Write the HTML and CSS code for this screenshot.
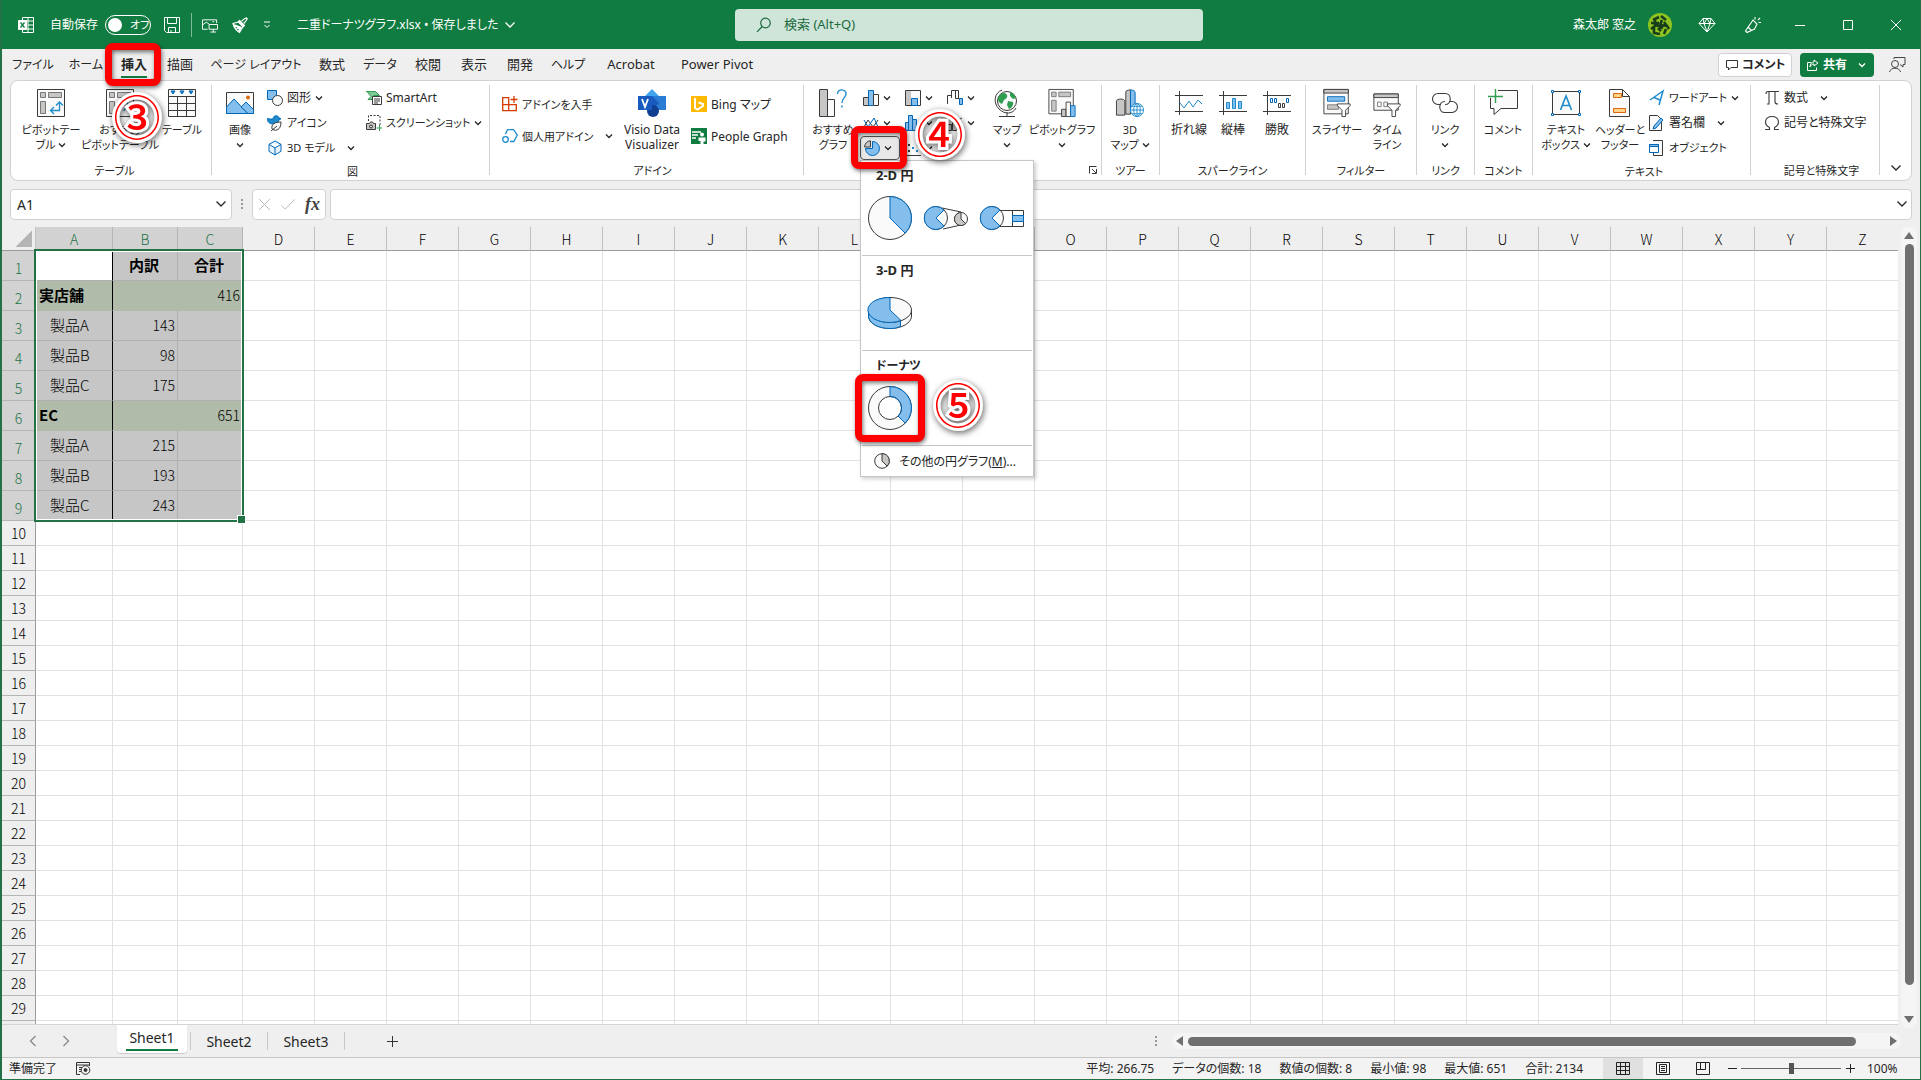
FILE: index.html
```html
<!DOCTYPE html>
<html lang="ja">
<head>
<meta charset="utf-8">
<title>二重ドーナツグラフ.xlsx</title>
<link rel="stylesheet" href="styles.css">
</head>
<body>
<svg class="defs" aria-hidden="true">
  <symbol id="chev" viewBox="0 0 8 8"><path d="M1 2.5l3 3 3-3" fill="none" stroke="currentColor" stroke-width="1.3"/></symbol>
  <symbol id="chev-lg" viewBox="0 0 12 8"><path d="M1.500 1.500L6 6l4.500-4.500" fill="none" stroke="currentColor" stroke-width="1.300"/></symbol>
</svg>

<header class="titlebar">
  <div class="quick">
    <svg class="ic excel" viewBox="0 0 16 16" fill="none" stroke="#fff"><path d="M4.500 3V.5h11v15h-11V13M10 .5v15M4.500 4h11M10 8h5.500M4.500 12h11"/><path d="M.5 3.500h8v9h-8z" fill="#fff"/><path d="M2.500 5.500l4 5M6.500 5.500l-4 5" stroke="#107c41" stroke-width="1.300"/></svg>
    <span class="autosave">自動保存</span>
    <button class="toggle"><i></i>オフ</button>
    <svg class="ic save" viewBox="0 0 16 16" fill="none" stroke="#fff"><path d="M.5.5h15v15H2.500l-2-2zM3.500.5v6h9v-6M4.500 15.500v-5h7v5M7 15v-2"/></svg>
    <span class="vsep"></span>
    <svg class="ic present" viewBox="0 0 17 16" fill="none" stroke="#fff"><path d="M6 12.500H.5v-10h15V6M.5 8l4-3 3 2M7.500 7.500h9v5h-9zM12 12.500v3M9 15.500h6"/><path d="M11 4.500h2"/></svg>
    <svg class="ic brush" viewBox="0 0 16 16" fill="none" stroke="#fff" stroke-width="1.200"><path d="M15 .8c-2 0-4 2-5.500 3.500M15.200 1c0 2-2 4-3.500 5.500"/><path d="M7.500 3.500l5 5-1.200 1.200-5-5z" fill="#fff"/><path d="M6.500 5L1 6.500c1 4 4 7.500 6.500 9L11 9.500z"/><path d="M1.500 7l8.500 3-2.500 5-1.500-1 1-2-3 .5 1-2.500-3 .5z" fill="#fff" stroke="none"/></svg>
    <svg class="ic more" viewBox="0 0 8 8" fill="none" stroke="#fff"><path d="M1 1h6M1.500 4L4 6.500 6.500 4"/></svg>
    <span class="doc">二重ドーナツグラフ.xlsx • 保存しました</span>
    <svg class="docchev" viewBox="0 0 12 8"><use href="#chev-lg"/></svg>
  </div>
  <label class="search">
    <svg viewBox="0 0 16 16" fill="none" stroke="#1b6b3e" stroke-width="1.200"><circle cx="9.500" cy="6" r="4.800"/><path d="M6.200 9.500L1 14.800"/></svg>
    <input type="text" placeholder="検索 (Alt+Q)" aria-label="検索">
  </label>
  <div class="account">
    <span>森太郎 窓之</span>
    <svg class="avatar" viewBox="0 0 24 24"><circle cx="12" cy="12" r="12" fill="#8fc31f"/><path d="M5 7l6-3M13 3l5 4M3 10h8M7 6v7l-4 3M14 7l-2 5 8 1M16 9l5 7M6 15v5l6 1M10 15l3 3M18 16l-2 5M8 12l7 3" stroke="#173d1b" stroke-width="2.600" fill="none"/></svg>
    <svg class="gem" viewBox="0 0 18 18" fill="none" stroke="#fff"><path d="M5 2.500h8l4 5L9 16 1 7.500zM1 7.500h16M5 2.500l1 5L9 16l3-8.500 1-5M6 7.500l3-5 3 5"/></svg>
    <svg class="pen" viewBox="0 0 18 18" fill="none" stroke="#fff" stroke-width="1.100"><path d="M9 4l4 4-2.500 5L3 16.500 1.500 15zM4 11l3.500 3.500M11 3.500V1M14 4l2-2M14.500 6.500H17"/></svg>
    <button class="win" aria-label="最小化"><svg viewBox="0 0 10 10" stroke="#fff"><path d="M0 5.500h10"/></svg></button>
    <button class="win" aria-label="最大化"><svg viewBox="0 0 10 10" stroke="#fff" fill="none"><path d="M.5.5h9v9h-9z"/></svg></button>
    <button class="win" aria-label="閉じる"><svg viewBox="0 0 10 10" stroke="#fff"><path d="M0 0l10 10M10 0L0 10"/></svg></button>
  </div>
</header>

<nav class="tabs">
  <a href="#" class="w56 k">ファイル</a><a href="#" class="w50 k">ホーム</a><a href="#" class="w46 active"><b>挿入</b><span class="mark mark-tab"></span><span class="step step-3">③</span></a><a href="#" class="w46">描画</a><a href="#" class="w106 k">ページ レイアウト</a><a href="#" class="w46">数式</a><a href="#" class="w50 k">データ</a><a href="#" class="w46">校閲</a><a href="#" class="w46">表示</a><a href="#" class="w46">開発</a><a href="#" class="w50 k">ヘルプ</a><a href="#" class="w76">Acrobat</a><a href="#" class="w96">Power Pivot</a>
  <div class="share-area">
    <button class="comment"><svg viewBox="0 0 12 12" fill="none" stroke="#333"><path d="M.5 1.500h11v7H5l-2.500 2.500V8.500h-2z"/></svg>コメント</button>
    <button class="share"><svg viewBox="0 0 12 12" fill="none" stroke="#fff"><path d="M4 3.500H.5v8h9V8.500M7 1l4 3-4 3V5C5 5 4 6 3 8c0-3 1.500-5 4-5z"/></svg>共有<svg class="chev"><use href="#chev"/></svg></button>
    <svg class="people" viewBox="0 0 17 17" fill="none" stroke="#444"><circle cx="6" cy="8" r="3.500"/><path d="M.5 16c1-5 10-5 11 0M5 3V1.500h11v7h-2v2.500l-3-2.500"/></svg>
  </div>
</nav>

<section class="ribbon">
  <div class="group g-table">
    <div class="tools">
      <button class="big w66"><svg viewBox="0 0 28 28" fill="none" stroke="#3b3a39"><path d="M.5.5h27v27H.5z" fill="#fafafa"/><path d="M3.500 3.500h5v5h-5zM11.500 3.500h13v5h-13zM3.500 12.500h5v12h-5z" fill="#c8c6c4" stroke="#797775"/><path d="M14 21.500h8.500v-8M17 18l-3.500 3.500L17 25M19 16.500l3.500-3.500 3.500 3.500" stroke="#1e8bcd" stroke-width="1.300"/></svg><span>ピボットテー<br>ブル <svg class="chev"><use href="#chev"/></svg></span></button>
      <button class="big w72"><svg viewBox="0 0 28 28" fill="none" stroke="#3b3a39"><path d="M.5.5h27v27H.5z" fill="#fafafa"/><path d="M3.500 3.500h5v5h-5zM11.500 3.500h13v5h-13zM3.500 12.500h5v12h-5z" fill="#c8c6c4" stroke="#797775"/><path d="M14 16c0-4 8-4 8 0 0 3-4 3-4 6" stroke="#1e8bcd" stroke-width="1.300"/></svg><span>おすすめ<br>ピボットテーブル</span></button>
      <button class="big w52"><svg viewBox="0 0 28 28" fill="none" stroke="#3b3a39"><path d="M.5.5h27v27H.5z" fill="#fafafa"/><path d="M.5 7.500h27M.5 14.500h27M.5 21.500h27M9.500 7.500v20M18.500 7.500v20"/><path d="M3 2h4L5 5zM12 2h4l-2 3zM21 2h4l-2 3z" fill="#1e8bcd" stroke="#0067b8"/></svg><span>テーブル</span></button>
    </div>
    <h2>テーブル</h2>
  </div>

  <div class="group g-pict">
    <div class="tools">
      <button class="big w48"><svg viewBox="0 0 28 28" fill="none" stroke="#3b3a39"><path d="M.5 3.500h27v21H.5z" fill="#fafafa"/><path d="M.5 18L8 10l14 14.500H.5z" fill="#83beec" stroke="#0067b8"/><path d="M15 18l5-5 7.500 7.500v4H22z" fill="#83beec" stroke="#0067b8"/><circle cx="22" cy="8.500" r="2" fill="#e0670b" stroke="none"/></svg><span>画像<br><svg class="chev"><use href="#chev"/></svg></span></button>
      <div class="stack w96">
        <button><svg viewBox="0 0 16 16"><path d="M.5.5h9v9h-9z" fill="#83beec" stroke="#0067b8"/><circle cx="10.500" cy="10.500" r="5" fill="#fafafa" stroke="#3b3a39"/></svg>図形<svg class="chev"><use href="#chev"/></svg></button>
        <button><svg viewBox="0 0 16 16"><path d="M.5 3.500c2 .5 4 1 6 0C6 1.500 8 .5 9.500.8S12 2 12 3l2 .8-2 .8c0 3-3 4.400-6 4.400-3.500 0-6-2.500-5.500-5.500z" fill="#1e8bcd" stroke="#0067b8"/><path d="M5 14c-1-5 3-7 9-7 0 6-3 9-7 8zM4 16l6-5" fill="#fafafa" stroke="#3b3a39"/></svg><span class="k">アイコン</span></button>
        <button><svg viewBox="0 0 16 16"><path d="M8 1l6 3.300v7L8 15l-6-3.700v-7zM2 4.300L8 8l6-3.700M8 8v7" fill="#e8f3fb" stroke="#0067b8"/></svg><span class="k">3D モデル</span><svg class="chev gap"><use href="#chev"/></svg></button>
      </div>
      <div class="stack w118">
        <button><svg viewBox="0 0 16 16"><path d="M.5 1.500h9l4 4h-6v4H2l3-3-4-5z" fill="#7fc99a" stroke="#2f9e50"/><path d="M6.500 6.500h9v8h-9zM8 9h6M8 11h6M8 13h4" fill="#fff" stroke="#3b3a39"/></svg>SmartArt</button>
        <button><svg viewBox="0 0 16 16" fill="none" stroke="#3b3a39"><path d="M2.500 6V.5H14V11" stroke-dasharray="2 1.500"/><path d="M.5 8.500h3l1-1.500h2l1 1.500h2v6h-9z" fill="#c8c6c4"/><circle cx="5" cy="11.500" r="1.500"/><path d="M13.500 10v6M10.500 13h5.500" stroke="#2f9e50"/></svg><span class="k">スクリーンショット</span><svg class="chev"><use href="#chev"/></svg></button>
      </div>
    </div>
    <h2>図</h2>
  </div>

  <div class="group g-addin">
    <div class="tools">
      <div class="stack two w112">
        <button><svg viewBox="0 0 16 16" fill="none" stroke="#d83b01" stroke-width="1.300"><path d="M.7 1.700h6v13h-6zM.7 8.700h13.600v6H6.700M12 0v7M8.500 3.500h7"/></svg><span class="k">アドインを入手</span></button>
        <button><svg viewBox="0 0 16 16" fill="none" stroke="#1e8bcd" stroke-width="1.300"><circle cx="3.500" cy="11.500" r="2.800"/><path d="M3.500 6l2-4.300h6L15.300 7l-3.500 6.500H8"/></svg><span class="k">個人用アドイン</span><svg class="chev gap"><use href="#chev"/></svg></button>
      </div>
      <button class="big w66"><svg viewBox="0 0 28 28"><path d="M14 0l7 7-7 7-7-7z" fill="#41a5ee"/><path d="M14 7h14v14H14z" fill="#2b7cd3"/><path d="M14 7l7 7-7 7z" fill="#185abd"/><circle cx="15" cy="22" r="6" fill="#103f91"/><path d="M0 7h14v14H0z" fill="#185abd"/><path d="M4 10l3 8 3-8" fill="none" stroke="#fff" stroke-width="1.800"/></svg><span class="lat">Visio Data<br>Visualizer</span></button>
      <div class="stack two w118">
        <button><svg viewBox="0 0 16 16"><path d="M0 0h16v16H0z" fill="#ffb900"/><path d="M4 2v10l2.500 1.500L12 10V8L7.500 6.500" fill="none" stroke="#fff" stroke-width="2"/></svg>Bing マップ</button>
        <button><svg viewBox="0 0 16 16"><path d="M0 0h16v16H0z" fill="#107c41"/><path d="M1 4h9M1 7h6M1 10h4" stroke="#fff" stroke-width="1.500"/><circle cx="11" cy="6.500" r="2" fill="#fff"/><path d="M7.500 9.500h7v4h-2V16h-3v-3h-2z" fill="#fff"/></svg>People Graph</button>
      </div>
    </div>
    <h2>アドイン</h2>
  </div>

  <div class="group g-chart">
    <div class="tools">
      <button class="big w54"><svg viewBox="0 0 28 28" fill="none"><path d="M.5.5h8v27h-8z" fill="#c8c6c4" stroke="#3b3a39"/><path d="M8.500 10.500h7v17h-7z" fill="#fafafa" stroke="#3b3a39"/><path d="M18.500 5c0-6 9-5 8.500 0-.3 4-4 4-4 9M23 16.500v2" stroke="#1e8bcd" stroke-width="1.400"/></svg><span>おすすめ<br>グラフ</span></button>
      <div class="chartgrid">
        <button><svg viewBox="0 0 16 16"><path d="M.5 7.500h5v8h-5z" fill="#c8c6c4" stroke="#3b3a39"/><path d="M5.500.5h5v15h-5z" fill="#83beec" stroke="#0067b8"/><path d="M10.500 4.500h5v11h-5z" fill="#fafafa" stroke="#3b3a39"/></svg><svg class="chev"><use href="#chev"/></svg></button>
        <button><svg viewBox="0 0 16 16"><path d="M.5.5h15v15H.5z" fill="#fafafa" stroke="#3b3a39"/><path d="M1 1h5v14H1z" fill="#c8c6c4"/><path d="M6.500 8.500h6v7h-6z" fill="#83beec" stroke="#0067b8"/></svg><svg class="chev"><use href="#chev"/></svg></button>
        <button><svg viewBox="0 0 16 16" fill="none" stroke="#3b3a39"><path d="M.5 14V5.500h4V.5h4v8h4"/><path d="M8.500.5h3v8M4.500 5v3"/><path d="M12.500 8.500h3v6h-3z" fill="#83beec" stroke="#0067b8"/></svg><svg class="chev"><use href="#chev"/></svg></button>
        <button><svg viewBox="0 0 16 16" fill="none"><path d="M1 12l4-7 5 7 5-7" stroke="#3b3a39"/><path d="M1 5l4 7 6-9 4 9" stroke="#0067b8"/></svg><svg class="chev"><use href="#chev"/></svg></button>
        <button><svg viewBox="0 0 16 16" fill="#83beec" stroke="#0067b8"><path d="M.5 7.500h3v8h-3zM3.500.5h4v15h-4zM7.500 4.500h4v11h-4zM11.500 9.500h3v6h-3z"/></svg><svg class="chev"><use href="#chev"/></svg></button>
        <button><svg viewBox="0 0 16 16" fill="none" stroke="#3b3a39"><path d="M0 5l5-4 4 5 6-3"/><path d="M.5 9.500h4v6h-4zM5.500 7.500h4v8h-4z" fill="#c8c6c4"/><path d="M11.500 8.500h3v7h-3z" fill="#83beec" stroke="#0067b8"/></svg><svg class="chev"><use href="#chev"/></svg></button>
        <div class="piewrap">
          <button class="pie"><svg viewBox="0 0 16 16"><path d="M6.500.8v6.200H.6A6 6 0 0 1 6.500.8z" fill="#c8c6c4" stroke="#3b3a39"/><path d="M8.500 1.500v7h-7a7 7 0 1 0 7-7z" fill="#83beec" stroke="#0067b8"/></svg><svg class="chev"><use href="#chev"/></svg></button>
          <div class="menu">
            <h3>2-D 円</h3>
            <div class="opts">
              <button aria-label="円"><svg viewBox="0 0 46 46"><circle cx="23" cy="23" r="21.500" fill="#fafafa" stroke="#3b3a39"/><path d="M23 1.500V23l15.200 15.200A21.500 21.500 0 0 0 23 1.500z" fill="#83beec" stroke="#0067b8"/></svg></button>
              <button aria-label="補助円グラフ付き円"><svg viewBox="0 0 46 46"><path d="M19 13l19 4M20 34l18-4" stroke="#3b3a39"/><circle cx="13" cy="23" r="11.500" fill="#fafafa" stroke="#3b3a39"/><path d="M21 15L13 23l8 8a11.500 11.500 0 1 1 0-16z" fill="#83beec" stroke="#0067b8"/><circle cx="38" cy="24" r="6.500" fill="#fafafa" stroke="#3b3a39"/><path d="M38 17.500V24l4.600 4.600A6.500 6.500 0 1 1 38 17.500z" fill="#c8c6c4" stroke="#3b3a39"/></svg></button>
              <button aria-label="補助縦棒グラフ付き円"><svg viewBox="0 0 46 46"><path d="M20 15.500h24.500v16H20M33.500 15.500v16" stroke="#3b3a39" fill="#fff"/><circle cx="13" cy="23" r="11.500" fill="#fafafa" stroke="#3b3a39"/><path d="M21 15L13 23l8 8a11.500 11.500 0 1 1 0-16z" fill="#83beec" stroke="#0067b8"/><path d="M33.500 20.500h11v6h-11z" fill="#83beec" stroke="#0067b8"/></svg></button>
            </div>
            <h3>3-D 円</h3>
            <div class="opts">
              <button aria-label="3-D 円"><svg viewBox="0 0 46 46"><path d="M1.500 20v6c0 7 9.500 12.500 21.500 12.500S44.500 33 44.500 26v-6z" fill="#fafafa" stroke="#3b3a39"/><path d="M1.500 20v6c0 7 9.500 12.500 21.500 12.500 4 0 7-.5 10.500-2v-6z" fill="#83beec" stroke="#0067b8"/><ellipse cx="23" cy="20" rx="21.500" ry="12.500" fill="#fafafa" stroke="#3b3a39"/><path d="M23 7.500V20l11 10.500A21.500 12.500 0 1 1 23 7.500z" fill="#83beec" stroke="#0067b8"/></svg></button>
            </div>
            <h3 class="k">ドーナツ</h3>
            <div class="opts">
              <button aria-label="ドーナツ" class="donut"><svg viewBox="0 0 46 46"><circle cx="23" cy="23" r="21.500" fill="#fafafa" stroke="#3b3a39"/><path d="M23 1.500V23l15.200 15.200A21.500 21.500 0 0 0 23 1.500z" fill="#83beec" stroke="#0067b8"/><circle cx="23" cy="23" r="11.500" fill="#fff" stroke="#3b3a39"/><path d="M23 11.500a11.500 11.500 0 0 1 8.100 19.600" fill="none" stroke="#0067b8"/></svg><span class="mark mark-donut"></span><span class="step step-5">⑤</span></button>
            </div>
            <button class="moreitem"><svg viewBox="0 0 16 16"><circle cx="8" cy="8" r="7.300" fill="#fafafa" stroke="#3b3a39"/><path d="M8 .7V8l5.200 5.200A7.300 7.300 0 0 0 8 .7z" fill="#c8c6c4" stroke="#3b3a39"/></svg><span>その他の円グラフ(<u>M</u>)...</span></button>
          </div>
          <span class="mark mark-pie"></span><span class="step step-4">④</span>
        </div>
        <button><svg viewBox="0 0 16 16"><path d="M.5 0v15.500H16" stroke="#3b3a39" fill="none"/><path d="M3 4h2v2H3zM3 10h2v2H3z" fill="#3b3a39"/><path d="M7 7h2v2H7zM11 10h2v2h-2zM12 4h2v2h-2z" fill="#1e8bcd"/></svg><svg class="chev"><use href="#chev"/></svg></button>
      </div>
      <button class="big w46"><svg viewBox="0 0 28 28" fill="none" stroke="#3b3a39"><circle cx="14" cy="12" r="9.500" fill="#fafafa"/><path d="M8 5c3-2 5-1 6 1s-1 4-3 5l-2 4c-3-1-4-3-4-5s1-4 3-5zM17 3c3 1 5 3 6 6l-3 1-3-3zM15 12l5 1c1 3-2 7-4 7l-2-4z" fill="#2f9e50" stroke="none"/><path d="M9 1C1 4 0 14 6 20s14 5 17-1M14 23v4M6 27.500h16"/></svg><span>マップ<br><svg class="chev"><use href="#chev"/></svg></span></button>
      <button class="big w64"><svg viewBox="0 0 30 31" class="w30" fill="none" stroke="#3b3a39"><path d="M.5.5h27v27H.5z" fill="#fafafa"/><path d="M3.500 3.500h5v5h-5zM11.500 3.500h13v5h-13zM3.500 12.500h5v12h-5z" fill="#c8c6c4" stroke="#797775"/><path d="M14.500 22.500h5v8h-5z" fill="#c8c6c4"/><path d="M19.500 14.500h5v16h-5z" fill="#fafafa"/><path d="M24.500 18.500h5v12h-5z" fill="#83beec" stroke="#0067b8"/></svg><span>ピボットグラフ<br><svg class="chev"><use href="#chev"/></svg></span></button>
    </div>
    <h2><svg class="launch" viewBox="0 0 8 8" fill="none" stroke="#3b3a39"><path d="M0 .5h7.500M.5 0v7.500M7.500 3v4.500H3M3 3l4 4"/></svg></h2>
  </div>

  <div class="group g-tour">
    <div class="tools"><button class="big w56"><svg viewBox="0 0 30 30" class="w30" fill="none"><path d="M.5 13c0-3 9-3 9 0v15h-9zM10.500 3v24h5V1c-3 0-5 1-5 2z" fill="#c8c6c4" stroke="#3b3a39"/><path d="M15.500 1c3 0 5 1 5 3v12l-5 9z" fill="#83beec" stroke="#0067b8"/><circle cx="22.500" cy="22.500" r="7" fill="#fff" stroke="#1e8bcd"/><path d="M15.500 22.500h14M17 18.500h11M17 26.500h11M22.500 15.500v14" stroke="#1e8bcd"/><ellipse cx="22.500" cy="22.500" rx="3.500" ry="7" stroke="#1e8bcd"/></svg><span>3D<br>マップ <svg class="chev"><use href="#chev"/></svg></span></button></div>
    <h2>ツアー</h2>
  </div>

  <div class="group g-spark">
    <div class="tools">
      <button class="big w44"><svg viewBox="0 0 28 28" fill="none" stroke="#3b3a39"><path d="M0 6.500h28M0 22.500h28M4.500 2v24"/><path d="M5 14l4 5 5-7 4 6 5-7 4 4" stroke="#1e8bcd"/></svg><span class="lat">折れ線</span></button>
      <button class="big w44"><svg viewBox="0 0 28 28" fill="none" stroke="#3b3a39"><path d="M0 6.500h28M0 22.500h28M4.500 2v24"/><path d="M7.500 13.500h3v6h-3zM13.500 9.500h3v10h-3zM19.500 12.500h3v7h-3z" fill="#83beec" stroke="#1e8bcd"/></svg><span class="lat">縦棒</span></button>
      <button class="big w44"><svg viewBox="0 0 28 28" fill="none" stroke="#3b3a39"><path d="M0 6.500h28M0 22.500h28M4.500 2v24"/><path d="M7.500 9.500h2v4h-2zM11.500 9.500h2v4h-2zM23.500 9.500h2v4h-2z" stroke="#0067b8"/><path d="M15.500 14.500h2v4h-2zM19.500 14.500h2v4h-2z"/></svg><span class="lat">勝敗</span></button>
    </div>
    <h2>スパークライン</h2>
  </div>

  <div class="group g-filter">
    <div class="tools">
      <button class="big w52"><svg viewBox="0 0 30 31" class="w30" fill="none" stroke="#3b3a39"><path d="M.5.5h27v27H.5z" fill="#fafafa"/><path d="M.5.5h27v4H.5z" fill="#c8c6c4"/><path d="M4.500 8.500h19v5h-19z" fill="#83beec" stroke="#0067b8"/><path d="M4.500 17.500h12v5h-12z" fill="#c8c6c4" stroke="#797775"/><path d="M15.500 16.500h14v2l-5 5v7h-4v-7l-5-5z" fill="#fff"/></svg><span>スライサー</span></button>
      <button class="big w48"><svg viewBox="0 0 30 31" class="w30" fill="none" stroke="#3b3a39"><path d="M.5 5.500h27v18H.5z" fill="#fafafa"/><path d="M.5 5.500h27v4H.5z" fill="#c8c6c4"/><path d="M4.500 14.500h4v5h-4zM11.500 14.500h4v5h-4z" stroke="#797775"/><path d="M15.500 16.500h14v2l-5 5v7h-4v-7l-5-5z" fill="#fff"/></svg><span>タイム<br>ライン</span></button>
    </div>
    <h2>フィルター</h2>
  </div>

  <div class="group g-link">
    <div class="tools"><button class="big w56"><svg viewBox="0 0 28 28" fill="none" stroke="#3b3a39" stroke-width="1.100"><path d="M10 15.500H7a5.500 5.500 0 0 1 0-11h7c7 0 7 11 0 11"/><path d="M18 12.500h3a5.500 5.500 0 0 1 0 11h-7c-7 0-7-11 0-11"/></svg><span>リンク<br><svg class="chev"><use href="#chev"/></svg></span></button></div>
    <h2>リンク</h2>
  </div>

  <div class="group g-link">
    <div class="tools"><button class="big w56"><svg viewBox="0 0 30 28" class="w30" fill="none" stroke="#3b3a39"><path d="M10 1.500h19.500v18H13l-7 6v-6H2.500V9" fill="#fafafa"/><path d="M7.500 0v14M0 7.500h15" stroke="#2f9e50" stroke-width="1.400"/></svg><span>コメント</span></button></div>
    <h2>コメント</h2>
  </div>

  <div class="group g-text">
    <div class="tools">
      <button class="big w56"><svg viewBox="0 0 32 28" class="w32" fill="none"><path d="M2.500 2.500h27v23h-27z" fill="#fafafa" stroke="#3b3a39"/><path d="M1.500 1.500h2v2h-2zM28.500 1.500h2v2h-2zM1.500 24.500h2v2h-2zM28.500 24.500h2v2h-2z" fill="#fff" stroke="#0067b8"/><path d="M10.500 21L16 7l5.500 14M12.500 16.500h7" stroke="#1e8bcd" stroke-width="1.600"/></svg><span>テキスト<br>ボックス <svg class="chev"><use href="#chev"/></svg></span></button>
      <button class="big w48"><svg viewBox="0 0 28 28" fill="none"><path d="M3.500.5h13l7 7v20h-20z" fill="#fafafa" stroke="#3b3a39"/><path d="M16.500.5v7h7" stroke="#3b3a39"/><path d="M7.500 4.500h8v4h-8zM7.500 19.500h12v4h-12z" fill="#fed48c" stroke="#e0670b"/></svg><span>ヘッダーと<br>フッター</span></button>
      <div class="stack w104">
        <button><svg viewBox="0 0 16 16" fill="none" stroke="#1e8bcd" stroke-width="1.500"><path d="M1 10L14 1l-4 14M5 7.500l7 3"/></svg><span class="k">ワードアート</span><svg class="chev"><use href="#chev"/></svg></button>
        <button><svg viewBox="0 0 16 16"><path d="M.5.5h8l4 4v11H.5z" fill="#fafafa" stroke="#3b3a39"/><path d="M5 11l7-8 2 2-7 8-3 1z" fill="#83beec" stroke="#0067b8"/></svg>署名欄<svg class="chev gap"><use href="#chev"/></svg></button>
        <button><svg viewBox="0 0 16 16"><path d="M4 .5h9.500v15h-9V11" fill="#fafafa" stroke="#3b3a39"/><path d="M.5 4.500h9v8h-9z" fill="#fff" stroke="#0067b8"/><path d="M.5 4.500h9v2h-9z" fill="#83beec" stroke="#0067b8"/></svg><span class="k">オブジェクト</span></button>
      </div>
    </div>
    <h2>テキスト</h2>
  </div>

  <div class="group g-sym">
    <div class="tools">
      <div class="stack w118">
        <button><svg viewBox="0 0 16 16" fill="none" stroke="#3b3a39" stroke-width="1.100"><path d="M2 4c0-2 1-2.500 2-2.500h11M5 1.500V14H3M11 1.500V12c0 1.500 1 2 3 2"/></svg>数式<svg class="chev gap"><use href="#chev"/></svg></button>
        <button><svg viewBox="0 0 16 16" fill="none" stroke="#3b3a39" stroke-width="1.100"><path d="M1 14.500h4.500v-2C-1 9 1 1.500 8 1.500s9 7.500 2.500 11v2H15"/></svg>記号と特殊文字</button>
      </div>
    </div>
    <h2>記号と特殊文字</h2>
  </div>
  <button class="collapse" aria-label="リボンを折りたたむ"><svg viewBox="0 0 12 8"><use href="#chev-lg"/></svg></button>
</section>

<section class="formula">
  <label class="namebox"><input type="text" value="A1" aria-label="名前ボックス"><svg viewBox="0 0 12 8"><use href="#chev-lg"/></svg></label>
  <span class="grip"></span>
  <div class="fxbox">
    <svg viewBox="0 0 14 14" stroke="#b5b5b5"><path d="M1 1l12 12M13 1L1 13"/></svg>
    <svg viewBox="0 0 16 14" class="w16" stroke="#b5b5b5" fill="none"><path d="M1 8l4 4L15 1.500"/></svg>
    <span class="fx">fx</span>
  </div>
  <label class="bar"><input type="text" aria-label="数式バー"><svg viewBox="0 0 12 8"><use href="#chev-lg"/></svg></label>
</section>

<main class="sheet">
  <div class="viewport">
    <table id="grid"></table>
    <div class="selection"></div>
  </div>
  <div class="vscroll"><span class="arrow up"></span><span class="thumb"></span><span class="arrow down"></span></div>
</main>

<section class="sheetbar">
  <div class="navs"><svg viewBox="0 0 8 10"><path d="M6.500 0L1.500 5l5 5" fill="none" stroke="#8a8a8a" stroke-width="1.300"/></svg><svg viewBox="0 0 8 10"><path d="M1.500 0l5 5-5 5" fill="none" stroke="#8a8a8a" stroke-width="1.300"/></svg></div>
  <button class="sh on"><span>Sheet1</span></button><button class="sh">Sheet2</button><button class="sh">Sheet3</button>
  <button class="add" aria-label="新しいシート"><svg viewBox="0 0 11 11" stroke="#333"><path d="M0 5.500h11M5.500 0v11"/></svg></button>
  <span class="grip"></span>
  <div class="hscroll"><span class="arrow left"></span><span class="thumb"></span><span class="arrow right"></span></div>
</section>

<footer class="status">
  <span>準備完了</span>
  <svg class="macro" viewBox="0 0 15 13" fill="none" stroke="#333"><path d="M4 12.500H.5V.5h13V4M.5 3h13M3 5.500h3M3 7.500h2M3 9.500h2"/><circle cx="9.500" cy="8" r="4.300" fill="#f3f3f3"/><circle cx="9.500" cy="8" r="1.500" fill="#333"/></svg>
  <div class="stats"><span>平均: 266.75</span><span>データの個数: 18</span><span>数値の個数: 8</span><span>最小値: 98</span><span>最大値: 651</span><span>合計: 2134</span></div>
  <button class="view on" aria-label="標準"><svg viewBox="0 0 14 14" fill="none" stroke="#222"><path d="M.5.5h13v12H.5zM.5 4.500h13M.5 8.500h13M4.500.5v12M9.500.5v12"/></svg></button>
  <button class="view" aria-label="ページ レイアウト"><svg viewBox="0 0 14 14" fill="none" stroke="#222"><path d="M.5.5h13v12H.5zM3.500 2.500h7v8h-7zM5 4.500h4M5 6.500h4M5 8.500h4"/></svg></button>
  <button class="view" aria-label="改ページ プレビュー"><svg viewBox="0 0 14 14" fill="none" stroke="#222"><path d="M.5.5h13v12H.5zM.5 7.500h9V.5M4.500.5v7"/></svg></button>
  <button class="zoombtn" aria-label="縮小"><svg viewBox="0 0 9 9" stroke="#222"><path d="M0 4.500h9"/></svg></button>
  <input type="range" class="zoom" min="10" max="190" value="100" aria-label="ズーム">
  <button class="zoombtn" aria-label="拡大"><svg viewBox="0 0 9 9" stroke="#222"><path d="M0 4.500h9M4.500 0v9"/></svg></button>
  <span class="pct">100%</span>
</footer>
<script src="grid.js"></script>
</body>
</html>
```
FILE: grid.js
```js
// Builds the worksheet: A to Z, rows 1 to 29 and the top of the next one, with the sales data in A1:C9.
var data = [
  ['', '内訳', '合計'],
  ['実店舗', '', '416'],
  ['製品A', '143', ''],
  ['製品B', '98', ''],
  ['製品C', '175', ''],
  ['EC', '', '651'],
  ['製品A', '215', ''],
  ['製品B', '193', ''],
  ['製品C', '243', '']
];
var letters = 'ABCDEFGHIJKLMNOPQRSTUVWXYZ'.split('');
var html = '<colgroup><col class="c-head"><col class="c-a"><col class="c-b"><col class="c-b">';
html += '<col class="c-n">'.repeat(23) + '</colgroup><thead><tr><th class="corner"></th>';
letters.forEach(function (l, i) {
  html += '<th scope="col"' + (i < 3 ? ' class="picked"' : '') + '>' + l + '</th>';
});
html += '</tr></thead><tbody>';
for (var r = 0; r < 30; r++) {
  var row = data[r];
  var cls = !row ? '' : r === 0 ? 'tall title' : (r === 1 || r === 5) ? 'tall total' : 'tall item';
  html += '<tr class="' + cls + '"><th scope="row">' + (r < 29 ? r + 1 : '') + '</th>';
  for (var c = 0; c < 26; c++) {
    html += '<td>' + (row && row[c] ? row[c] : '') + '</td>';
  }
  html += '</tr>';
}
document.getElementById('grid').innerHTML = html + '</tbody>';
```
FILE: styles.css
```css
* { box-sizing: border-box; }
html, body { height: 100%; }
body {
  margin: 0;
  display: flex;
  flex-direction: column;
  overflow: hidden;
  border: solid #217346;
  border-width: 0 1px 1px 2px;
  background: #efefef;
  color: #262626;
  font: 12px/15px "Noto Sans", "Noto Sans CJK JP", sans-serif;
  font-feature-settings: "palt";
}
button, input { font: inherit; font-feature-settings: inherit; color: inherit; background: none; border: 0; padding: 0; margin: 0; }
button { white-space: nowrap; }
a { color: inherit; text-decoration: none; }
h2, h3 { margin: 0; font-size: 12px; }
svg { display: block; flex: none; overflow: visible; }
.defs { position: absolute; width: 0; height: 0; }
.chev { width: 8px; height: 8px; }

/* title bar */
.titlebar { flex: none; height: 49px; background: #107c41; color: #fff; display: flex; align-items: center; justify-content: space-between; }
.quick { display: flex; align-items: center; flex: 1 1 0; padding-left: 16px; }
.ic { width: 16px; height: 16px; }
.autosave { margin-left: 16px; }
.toggle { display: flex; align-items: center; gap: 8px; width: 46px; height: 20px; margin: 0 13px 0 7px; padding-left: 2px; border: 1px solid #fff; border-radius: 10px; font-size: 11px; }
.toggle i { width: 14px; height: 14px; border-radius: 50%; background: #fff; }
.vsep { width: 1px; height: 24px; margin: 0 10px 0 11px; background: #7fb999; }
.brush { margin-left: 14px; }
.more { width: 8px; height: 8px; margin: 0 26px 0 15px; }
.docchev { width: 12px; height: 8px; margin-left: 6px; }
.search { flex: 0 1 468px; height: 32px; display: flex; align-items: center; gap: 12px; padding-left: 21px; background: #cfe5d9; border-radius: 4px; color: #1b6b3e; font-size: 13px; }
.search svg { width: 16px; height: 16px; }
.search input { flex: 1; }
.search input::placeholder { color: #1b6b3e; opacity: 1; }
.account { display: flex; align-items: center; justify-content: flex-end; flex: 1 1 0; }
.avatar { width: 24px; height: 24px; margin: 0 26px 0 12px; }
.gem { width: 18px; height: 18px; margin-right: 28px; }
.pen { width: 18px; height: 18px; margin-right: 14px; }
.win { width: 48px; height: 48px; display: grid; place-items: center; }
.win svg { width: 10px; height: 10px; }

/* tabs */
.tabs { flex: none; height: 31px; display: flex; align-items: center; padding-left: 3px; font-size: 13px; }
.tabs a { text-align: center; white-space: nowrap; line-height: 33px; position: relative; flex: none; }
.tabs .k { font-size: 12px; }
.tabs .active b { display: inline-block; line-height: 24px; border-bottom: 2px solid #107c41; }
.w44 { width: 44px; } .w46 { width: 46px; } .w48 { width: 48px; } .w50 { width: 50px; } .w52 { width: 52px; } .w54 { width: 54px; }
.w56 { width: 56px; } .w64 { width: 64px; } .w66 { width: 66px; } .w72 { width: 72px; } .w76 { width: 76px; } .w96 { width: 96px; }
.w104 { width: 104px; } .w106 { width: 106px; } .w112 { width: 112px; } .w118 { width: 118px; }
.share-area { margin-left: auto; display: flex; align-items: center; gap: 8px; padding-right: 14px; font-size: 12px; font-weight: bold; }
.share-area svg { width: 12px; height: 12px; }
.comment, .share { height: 24px; display: flex; align-items: center; gap: 4px; border-radius: 4px; padding: 0 7px; width: 74px; font-weight: bold; }
.comment { background: #fff; border: 1px solid #d1d1d1; }
.share { background: #107c41; color: #fff; }
.share .chev { width: 8px; height: 8px; margin-left: 7px; }
.share-area .people { width: 17px; height: 17px; margin-left: 7px; }

/* ribbon */
.ribbon { flex: none; height: 101px; margin: 0 8px; display: flex; background: #fff; border: 1px solid #d1d1d1; border-radius: 8px; }
.group { flex: none; display: flex; flex-direction: column; margin: 4px 0 5px; border-right: 1px solid #d1d1d1; }
.tools { flex: 1; display: flex; height: 76px; }
.group h2 { height: 16px; line-height: 23px; text-align: center; font-weight: normal; font-size: 11px; }
.big { display: flex; flex-direction: column; align-items: center; gap: 5px; padding-top: 4px; flex: none; }
.big > svg { width: 28px; height: 28px; }
.big > .w30 { width: 30px; } .big > .w32 { width: 32px; }
.big > span { display: block; line-height: 15px; margin: 0 -10px; font-size: 11px; }
.big > .lat { font-size: 12px; }
.big .chev { display: inline-block; }
.stack { display: flex; flex-direction: column; flex: none; }
.stack button { height: 25px; display: flex; align-items: center; gap: 4px; }
.stack.two { padding-top: 3px; }
.stack.two button { height: 32px; }
.stack .k { font-size: 11px; }
.stack button > svg:first-child { width: 16px; height: 16px; }
.stack .gap { margin-left: 8px; }
.g-table { width: 201px; padding-left: 7px; }
.g-pict { width: 278px; padding-left: 4px; }
.g-pict .tools { gap: 3px; }
.g-addin { width: 314px; padding-left: 12px; }
.g-addin .big { margin: 0 6px 0 5px; }
.g-chart { width: 298px; padding-left: 2px; }
.g-tour, .g-link { width: 58px; }
.g-spark { width: 146px; padding: 0 7px; }
.g-filter { width: 111px; padding: 0 5px; }
.g-text { width: 218px; padding-left: 5px; }
.g-text .tools { gap: 2px; }
.g-text .stack { margin-left: 3px; }
.g-sym { width: 129px; padding-left: 13px; }
.g-chart h2 { display: flex; justify-content: flex-end; padding: 6px 4px 0 0; }
.launch { width: 8px; height: 8px; }
.chartgrid { display: grid; grid-template-columns: 42px 42px 40px; grid-auto-rows: 25px; width: 124px; }
.chartgrid > button, .pie { display: flex; align-items: center; gap: 4px; padding-left: 3px; }
.chartgrid .pie > svg:first-child, .chartgrid > button > svg:first-child { width: 16px; height: 16px; }
.piewrap { position: relative; padding-top: 1px; }
.pie { width: 40px; height: 24px; background: #e8e8e8; border: 1px solid #555; border-radius: 4px; }
.collapse { flex: 1; display: flex; justify-content: center; align-items: flex-end; padding-bottom: 8px; }
.collapse svg, .namebox svg, .bar svg { width: 12px; height: 8px; }

/* chart menu */
.menu { position: absolute; z-index: 5; left: 0; top: 25px; width: 174px; padding: 7px 1px 0; background: #fff; border: 1px solid #c6c6c6; box-shadow: 2px 2px 4px #0003; }
.menu h3 { height: 16px; line-height: 15px; padding-left: 14px; font-size: 13px; }
.menu .k { font-size: 12px; }
.opts { display: flex; gap: 10px; height: 72px; padding: 11px 0 0 5px; margin-bottom: 7px; border-bottom: 1px solid #c6c6c6; }
.opts button { width: 46px; height: 46px; position: relative; }
.opts svg { width: 46px; height: 46px; }
.moreitem { display: flex; align-items: center; gap: 9px; height: 30px; width: 100%; margin-top: -7px; padding-left: 12px; }
.moreitem svg { width: 16px; height: 16px; }

/* tutorial callouts */
.mark { position: absolute; z-index: 6; border: 7px solid #f00; border-radius: 8px; filter: drop-shadow(1px 2px 2px #0008); pointer-events: none; }
.mark-tab { left: -6px; top: -5px; width: 56px; height: 43px; }
.mark-pie { left: -9px; top: -9px; width: 56px; height: 43px; }
.mark-donut { left: -12px; top: -11px; width: 70px; height: 68px; }
.step { position: absolute; z-index: 7; width: 48px; height: 48px; font: 500 47px/48px "Noto Sans CJK JP", sans-serif; font-feature-settings: normal; text-align: center; color: #f00; -webkit-text-stroke: 6px #fff; paint-order: stroke fill; filter: drop-shadow(1px 2px 3px #0009); pointer-events: none; }
.step-3 { left: 2px; top: 43px; }
.step-4 { left: 56px; top: -27px; }
.step-5 { left: 67px; top: -6px; }

/* formula bar */
.formula { flex: none; display: flex; align-items: center; height: 46px; padding: 0 8px; }
.namebox, .fxbox, .bar { height: 31px; background: #fff; border: 1px solid #d1d1d1; border-radius: 4px; display: flex; align-items: center; }
.namebox { width: 222px; padding: 0 4px 0 6px; font-size: 14px; }
.namebox input, .bar input { flex: 1; min-width: 0; }
.grip { width: 2px; height: 10px; margin: 0 9px; background: repeating-linear-gradient(#999 0 2px, transparent 2px 4px); }
.fxbox { width: 74px; padding: 0 5px; justify-content: space-between; }
.fxbox svg { width: 13px; height: 13px; }
.fxbox .w16 { width: 16px; }
.fx { font: italic bold 18px/20px "Liberation Serif", serif; color: #444; }
.bar { flex: 1; margin-left: 4px; padding: 0 3px; }

/* worksheet */
.sheet { flex: 1 1 0; min-height: 0; display: flex; }
.viewport { flex: 1; min-width: 0; overflow: hidden; position: relative; border-bottom: 1px solid #d4d4d4; }
#grid { table-layout: fixed; width: 1897px; border-collapse: separate; border-spacing: 0; background: #fff; font: 15px/18px "Noto Sans CJK JP", sans-serif; color: #000; }
.c-head { width: 34px; } .c-a { width: 77px; } .c-b { width: 65px; } .c-n { width: 72px; }
#grid th, #grid td { padding: 0; border: solid #e1e1e1; border-width: 0 1px 1px 0; height: 25px; font-weight: 300; overflow: hidden; white-space: nowrap; }
#grid thead th { height: 24px; background: #efefef; border-color: #c0c0c0; border-bottom-color: #9b9b9b; font-size: 14px; }
#grid thead .picked { background: #d2d2d2; color: #217346; border-right-color: #b5b5b5; }
#grid thead .corner { background: linear-gradient(135deg, transparent 50%, #b5b5b5 50%) 13px 4px / 17px 16px no-repeat #efefef; }
#grid tbody th { background: #efefef; border-color: #9b9b9b; border-bottom-color: #b5b5b5; vertical-align: bottom; padding-bottom: 3px; font-size: 14px; }
#grid .tall th { height: 30px; background: #d2d2d2; color: #217346; }
.tall td:nth-child(-n+4) { background: #c6c6c6; }
#grid .tall td:nth-child(-n+4) { border-color: #b0b0b0; text-align: right; font-size: 14px; padding-bottom: 2px; }
#grid .tall td:nth-child(2) { border-right-color: #000; font-size: 15px; text-align: left; padding-left: 14px; }
#grid .title td:nth-child(2) { background: #fff; }
#grid .title td:nth-child(n+3):nth-child(-n+4) { text-align: center; font-weight: 700; font-size: 15px; }
#grid .total td:nth-child(-n+4) { background: #b0bba9; border-color: #b0bba9; }
#grid .total td:nth-child(2) { border-right-color: #000; padding-left: 3px; font-weight: 700; }
#grid .tall td:nth-child(n+3):nth-child(-n+4) { padding-right: 2px; }
.selection { position: absolute; left: 32px; top: 22px; width: 210px; height: 273px; border: 2px solid #217346; box-shadow: inset 0 0 0 1px #fff; }
.selection::after { content: ""; position: absolute; right: -4px; bottom: -4px; width: 7px; height: 7px; background: #217346; border: 1px solid #fff; }
.vscroll, .hscroll { background: #f5f5f5; border-radius: 8px; display: flex; align-items: center; }
.vscroll { width: 16px; margin: 0 3px -3px 3px; flex-direction: column; padding: 5px 0; gap: 5px; }
.arrow { width: 0; height: 0; border: 5px solid transparent; }
.up { border-width: 0 5px 7px; border-bottom-color: #707070; }
.down { border-width: 7px 5px 0; border-top-color: #707070; margin-top: 26px; }
.left { border-width: 5px 7px 5px 0; border-right-color: #707070; }
.right { border-width: 5px 0 5px 7px; border-left-color: #707070; margin-left: 29px; }
.thumb { flex: 1; background: #707070; border-radius: 5px; }
.vscroll .thumb { width: 9px; }
.hscroll { flex: none; width: 38%; height: 16px; padding: 0 4px; gap: 5px; margin: 0 19px 0 0; }
.hscroll .thumb { height: 9px; }

/* sheet tabs */
.sheetbar { flex: none; height: 32px; display: flex; align-items: center; font-size: 14px; }
.navs { display: flex; gap: 25px; width: 115px; padding-left: 27px; }
.navs svg { width: 8px; height: 10px; }
.sh { height: 18px; width: 77px; border-right: 1px solid #c8c8c8; line-height: 20px; }
.sh.on { width: 70px; height: 28px; margin: 0 3px 4px 0; background: #fff; border: 0; border-radius: 0 0 4px 4px; box-shadow: 0 1px 1px #ccc; }
.sh.on + .sh { border-left: 1px solid #c8c8c8; width: 78px; }
.sh.on span { display: inline-block; width: 52px; line-height: 22px; border-bottom: 2px solid #107c41; }
.add { width: 94px; display: grid; place-items: center; }
.add svg { width: 11px; height: 11px; }
.sheetbar .grip { margin: 0 15px 0 auto; }

/* status bar */
.status { flex: none; height: 22px; display: flex; align-items: center; padding-left: 7px; border-top: 1px solid #c6c6c6; background: #f3f3f3; }
.macro { width: 15px; height: 13px; margin-left: 19px; }
.stats { margin-left: auto; display: flex; gap: 18px; padding-right: 20px; }
.view { width: 40px; height: 21px; display: grid; place-items: center; }
.view.on { background: #e0e0e0; }
.view svg { width: 14px; height: 14px; }
.zoombtn { width: 9px; height: 9px; }
.view + .zoombtn { margin-left: 5px; }
.zoombtn svg { width: 9px; height: 9px; }
.zoom { appearance: none; width: 100px; height: 11px; margin: 0 5px 0 4px; background: linear-gradient(#666, #666) center / 100% 1px no-repeat; }
.zoom::-webkit-slider-thumb { appearance: none; width: 5px; height: 11px; background: #555; }
.pct { width: 65px; padding-left: 12px; }
```
